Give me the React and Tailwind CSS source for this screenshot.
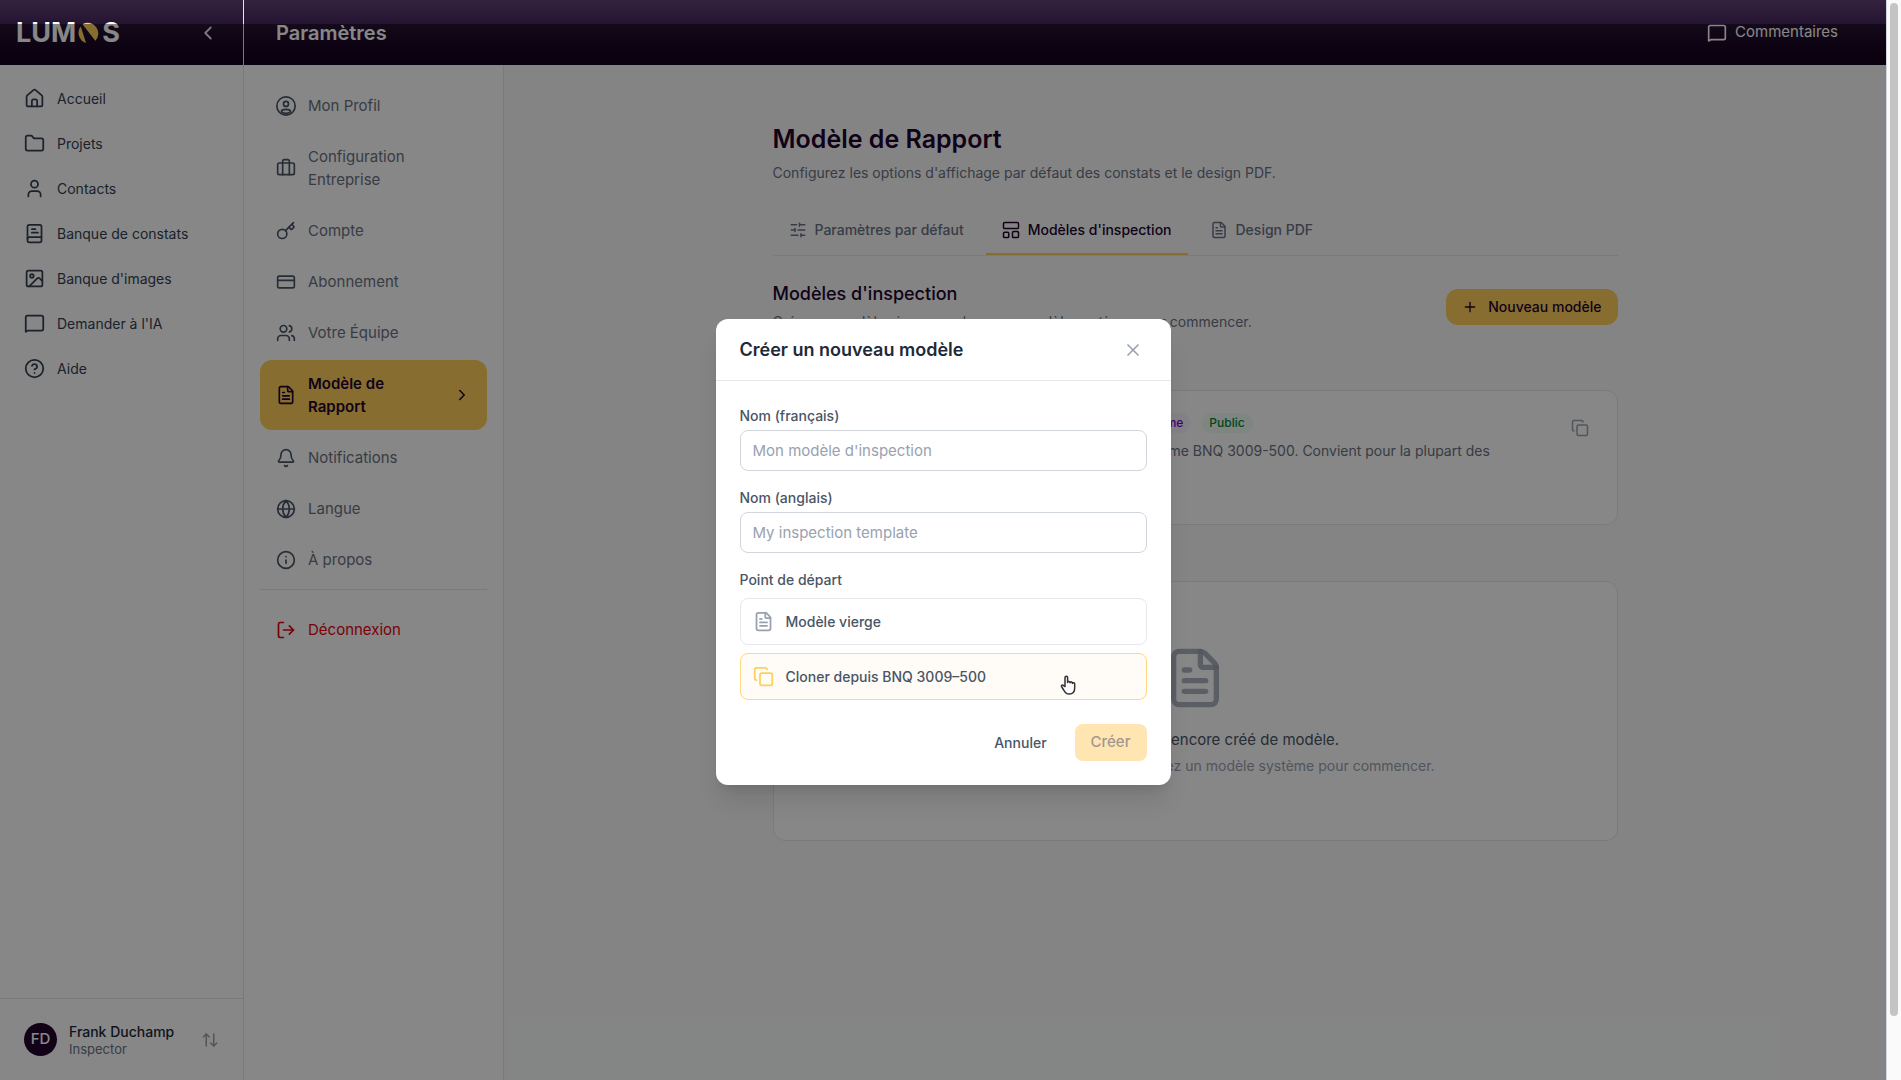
import React, { useState } from "react";
import {
  ArrowUpDown,
  Bell,
  Briefcase,
  ChevronLeft,
  ChevronRight,
  CircleQuestionMark,
  Copy,
  CreditCard,
  FileText,
  Folder,
  Globe,
  Image,
  Info,
  Key,
  LogOut,
  Plus,
  SlidersHorizontal,
  User,
  Users,
  X,
} from "lucide-react";

const Icon = ({ children, size = 22, className = "" }) => (
  <svg
    className={className}
    width={size}
    height={size}
    viewBox="0 0 24 24"
    fill="none"
    stroke="currentColor"
    strokeWidth={2}
    strokeLinecap="round"
    strokeLinejoin="round"
    aria-hidden="true"
  >
    {children}
  </svg>
);

const HomeIcon = (props) => (
  <Icon {...props}>
    <path d="M3 10a2 2 0 0 1 .7-1.5l7-6a2 2 0 0 1 2.6 0l7 6A2 2 0 0 1 21 10v9a2 2 0 0 1-2 2H5a2 2 0 0 1-2-2z" />
    <path d="M9 21v-6a2 2 0 0 1 2-2h2a2 2 0 0 1 2 2v6" />
  </Icon>
);

const BookIcon = (props) => (
  <Icon {...props}>
    <path d="M6 2h12a2 2 0 0 1 2 2v16a2 2 0 0 1-2 2H6a2 2 0 0 1-2-2V4a2 2 0 0 1 2-2z" />
    <path d="M20 16H6a2 2 0 0 0-2 2" />
    <path d="M9 7h4M9 11h7" />
  </Icon>
);

const MessageIcon = (props) => (
  <Icon {...props}>
    <path d="M2 21.5V5a2 2 0 0 1 2-2h16a2 2 0 0 1 2 2v13a2 2 0 0 1-2 2H4.5z" />
  </Icon>
);

const ProfileIcon = (props) => (
  <Icon {...props}>
    <circle cx="12" cy="12" r="11" />
    <circle cx="12" cy="9.5" r="3" />
    <path d="M6.500 19c0-2 2.500-3 5.500-3s5.500 1 5.500 3c-3 2.500-8 2.500-11 0z" />
  </Icon>
);

const TemplatesIcon = (props) => (
  <Icon {...props}>
    <rect x="2" y="2" width="20" height="8" rx="1.5" />
    <rect x="2" y="15" width="7" height="7" rx="1.5" />
    <rect x="14" y="14" width="8" height="8" rx="1.5" />
  </Icon>
);

const Logo = () => (
  <div className="flex items-center text-[27px] leading-7 font-bold text-white">
    <span>LUM</span>
    <svg className="mx-0.5" width="22" height="22" viewBox="0 0 22 22" role="img" aria-label="O">
      <path d="M4.5 2.300A10.500 10.500 0 0 1 17.300 18.700Z" fill="#ffcf5a" />
      <path d="M2.800 4.500A10.500 10.500 0 0 0 8 21Z" fill="#ffcf5a" />
    </svg>
    <span>S</span>
  </div>
);

const HandCursor = () => (
  <svg
    className="pointer-events-none absolute right-[70px] bottom-1 h-5 w-4"
    viewBox="0 0 16 20"
    fill="#fff"
    stroke="#333"
    strokeWidth="1.5"
    strokeLinejoin="round"
    aria-hidden="true"
  >
    <path d="M5 11.500V2.500a1.300 1.300 0 0 1 2.600 0V7.500a1.200 1.200 0 0 1 2.400.3a1.200 1.200 0 0 1 2.400.6a1.200 1.200 0 0 1 2.300.6V13c0 3.500-2 6-5.500 6-3 0-4.200-1.500-5.200-3.500L1.500 11.500c-.5-1.200 1-2 2-.9z" />
  </svg>
);

const NAV = [
  { label: "Accueil", icon: HomeIcon },
  { label: "Projets", icon: Folder },
  { label: "Contacts", icon: User },
  { label: "Banque de constats", icon: BookIcon },
  { label: "Banque d'images", icon: Image },
  { label: "Demander à l'IA", icon: MessageIcon },
  { label: "Aide", icon: CircleQuestionMark },
];

const SETTINGS = [
  { label: "Mon Profil", icon: ProfileIcon },
  { label: "Configuration Entreprise", icon: Briefcase },
  { label: "Compte", icon: Key },
  { label: "Abonnement", icon: CreditCard },
  { label: "Votre Équipe", icon: Users },
  { label: "Modèle de Rapport", icon: FileText, active: true },
  { label: "Notifications", icon: Bell },
  { label: "Langue", icon: Globe },
  { label: "À propos", icon: Info },
];

const TABS = [
  { label: "Paramètres par défaut", icon: SlidersHorizontal },
  { label: "Modèles d'inspection", icon: TemplatesIcon, active: true },
  { label: "Design PDF", icon: FileText },
];

const Sidebar = () => (
  <aside className="flex w-[244px] shrink-0 flex-col border-r border-gray-200 bg-white">
    <div className="flex h-[65px] shrink-0 items-center justify-between bg-linear-to-b from-[#33233f] via-[#261433] via-35% to-[#12001a] pr-6 pl-4">
      <Logo />
      <button type="button" aria-label="Réduire le menu" className="text-gray-200">
        <ChevronLeft size={22} />
      </button>
    </div>
    <nav className="flex flex-1 flex-col pt-[11px]">
      {NAV.map(({ label, icon: NavIcon }) => (
        <a
          key={label}
          href="#"
          className="flex h-[45px] items-center gap-3 pl-6 text-sm text-gray-700"
        >
          <NavIcon size={21} />
          {label}
        </a>
      ))}
    </nav>
    <div className="flex h-[82px] shrink-0 items-center gap-3 border-t border-gray-200 px-6">
      <span className="flex size-[33px] items-center justify-center rounded-full bg-[#22042e] text-[15px] font-medium text-white">
        FD
      </span>
      <div className="flex-1">
        <p className="text-sm leading-[18px] font-medium text-gray-800">Frank Duchamp</p>
        <p className="text-[13px] leading-4 text-gray-500">Inspector</p>
      </div>
      <ArrowUpDown size={18} className="text-gray-400" />
    </div>
  </aside>
);

const SettingsNav = () => (
  <nav className="flex w-[260px] shrink-0 flex-col gap-1 border-r border-gray-200 bg-white px-4 pt-[17px]">
    {SETTINGS.map(({ label, icon: ItemIcon, active }) => (
      <a
        key={label}
        href="#"
        className={`flex items-center gap-3 rounded-xl px-4 py-3 text-[15px] leading-[23px] ${
          active ? "bg-[#ffcf5a] font-semibold text-[#22042e]" : "text-gray-500"
        }`}
      >
        <ItemIcon size={20} className={active ? "shrink-0" : "shrink-0 text-gray-600"} />
        <span className="w-[120px]">{label}</span>
        {active && <ChevronRight size={18} className="ml-auto" />}
      </a>
    ))}
    <div className="mt-0.5 border-t border-gray-200 pt-4">
      <button
        type="button"
        className="flex w-full items-center gap-3 px-4 py-3 text-[15px] leading-[23px] text-red-600"
      >
        <LogOut size={20} />
        Déconnexion
      </button>
    </div>
  </nav>
);

const ReportTemplates = () => (
  <main className="flex-1 bg-gray-50">
    <div className="mx-auto w-full max-w-[845px] pt-[58px]">
      <h1 className="text-[25px] leading-8 font-semibold text-[#22042e]">Modèle de Rapport</h1>
      <p className="mt-2 text-sm leading-5 text-gray-500">
        Configurez les options d'affichage par défaut des constats et le design PDF.
      </p>

      <div className="mt-6 flex gap-1.5 border-b border-gray-200">
        {TABS.map(({ label, icon: TabIcon, active }) => (
          <button
            key={label}
            type="button"
            className={`flex h-12 items-center gap-2 border-b-2 px-4 text-sm font-medium ${
              active ? "border-[#ffcf5a] text-[#22042e]" : "border-transparent text-gray-500"
            }`}
          >
            <TabIcon size={18} />
            {label}
          </button>
        ))}
      </div>

      <div className="mt-6 flex items-center justify-between">
        <div>
          <h2 className="text-lg leading-7 font-medium text-[#22042e]">Modèles d'inspection</h2>
          <p className="mt-0.5 text-sm leading-6 text-gray-500">
            Créez un modèle vierge ou clonez un modèle système pour commencer.
          </p>
        </div>
        <button
          type="button"
          className="flex h-9 items-center gap-2.5 rounded-xl bg-[#ffcf5a] px-4 text-sm font-medium text-[#22042e]"
        >
          <Plus size={16} />
          Nouveau modèle
        </button>
      </div>

      <h3 className="mt-5 text-[15px] leading-6 font-medium text-gray-600">Modèles système</h3>
      <section className="mt-3 flex h-[135px] justify-between rounded-xl border border-gray-200 bg-white p-5">
        <div>
          <div className="flex items-center gap-2.5">
            <h4 className="w-[322px] text-[15px] leading-6 font-medium text-gray-800">
              Inspection préachat BNQ 3009-500
            </h4>
            <span className="rounded-full bg-purple-50 px-2 py-0.5 text-xs font-medium text-purple-700">
              Système
            </span>
            <span className="rounded-full bg-green-50 px-2 py-0.5 text-xs font-medium text-green-700">
              Public
            </span>
          </div>
          <p className="mt-1 w-[710px] text-sm leading-6 text-gray-500">
            Modèle d'inspection préachat complet conforme à la norme BNQ 3009-500. Convient pour la
            plupart des inspections.
          </p>
        </div>
        <button type="button" aria-label="Cloner le modèle" className="mt-2 mr-2 self-start text-gray-400">
          <Copy size={18} />
        </button>
      </section>

      <h3 className="mt-4 text-[15px] leading-6 font-medium text-gray-600">Mes modèles</h3>
      <section className="mt-4 flex h-[260px] flex-col items-center rounded-xl border border-gray-200 bg-white pt-16">
        <FileText size={64} className="text-gray-400/80" />
        <p className="mt-[18px] text-[15px] leading-6 text-gray-600">
          Vous n'avez pas encore créé de modèle.
        </p>
        <p className="mt-0.5 text-sm leading-6 text-gray-400">
          Créez un modèle vierge ou clonez un modèle système pour commencer.
        </p>
      </section>
    </div>
  </main>
);

const Field = ({ id, label, placeholder }) => (
  <div className="mb-4">
    <label htmlFor={id} className="block text-sm leading-[21px] font-medium text-gray-600">
      {label}
    </label>
    <input
      id={id}
      type="text"
      placeholder={placeholder}
      className="mt-1 block h-[41px] w-full rounded-lg border border-gray-300 px-3 text-[15px] text-gray-800 placeholder:text-gray-400"
    />
  </div>
);

const CreateModal = ({ onClose }) => (
  <div
    role="dialog"
    aria-modal="true"
    aria-labelledby="create-title"
    className="w-full max-w-[455px] rounded-xl bg-white shadow-xl"
  >
    <div className="flex h-[62px] items-center justify-between border-b border-gray-200 px-6">
      <h2 id="create-title" className="text-lg font-semibold text-gray-800">
        Créer un nouveau modèle
      </h2>
      <button type="button" aria-label="Fermer" onClick={onClose} className="pr-1 text-gray-400">
        <X size={20} />
      </button>
    </div>
    <form className="p-6" onSubmit={(e) => e.preventDefault()}>
      <Field id="name-fr" label="Nom (français)" placeholder="Mon modèle d'inspection" />
      <Field id="name-en" label="Nom (anglais)" placeholder="My inspection template" />
      <p className="mb-2 text-sm leading-[21px] font-medium text-gray-600">Point de départ</p>
      <div className="flex flex-col gap-2">
        <button
          type="button"
          className="flex h-[47px] items-center gap-3 rounded-lg border border-gray-200 px-3 text-sm font-medium text-gray-600"
        >
          <FileText size={21} className="text-gray-400" />
          Modèle vierge
        </button>
        <button
          type="button"
          className="relative flex h-[47px] items-center gap-3 rounded-lg border border-[#ffd97f] bg-[#fffbf7] px-3 text-sm font-medium text-gray-600"
        >
          <Copy size={21} className="text-[#ffcf5a]" />
          Cloner depuis BNQ 3009–500
          <HandCursor />
        </button>
      </div>
      <div className="mt-6 flex justify-end gap-3">
        <button type="button" onClick={onClose} className="h-[37px] px-4 text-sm font-medium text-gray-600">
          Annuler
        </button>
        <button
          type="submit"
          disabled
          className="h-[37px] rounded-lg bg-[#ffe5b2] px-4 text-[15px] font-medium text-[#a39691]"
        >
          Créer
        </button>
      </div>
    </form>
  </div>
);

export default function App() {
  const [open, setOpen] = useState(true);

  return (
    <div className="flex h-screen overflow-hidden bg-white font-[Inter,'Noto_Sans',sans-serif]">
      <div className="relative flex min-w-0 flex-1">
        <Sidebar />
        <div className="flex min-w-0 flex-1 flex-col">
          <header className="flex h-[65px] shrink-0 items-center justify-between bg-linear-to-b from-[#33233f] via-[#261433] via-35% to-[#12001a] pr-12 pl-8 text-white">
            <h1 className="text-xl font-semibold">Paramètres</h1>
            <button type="button" className="flex items-center gap-2 text-[15px]">
              <MessageIcon size={20} />
              Commentaires
            </button>
          </header>
          <div className="flex min-h-0 flex-1">
            <SettingsNav />
            <ReportTemplates />
          </div>
        </div>
        {open && (
          <div className="absolute inset-0 top-6 flex items-center justify-center bg-black/47">
            <CreateModal onClose={() => setOpen(false)} />
          </div>
        )}
      </div>
      <div className="flex w-[15px] shrink-0 justify-center border-l border-gray-300 bg-[#fafafa] pt-[3px] pb-16">
        <div className="w-2 rounded-full bg-[#c4c4c4]" />
      </div>
    </div>
  );
}
